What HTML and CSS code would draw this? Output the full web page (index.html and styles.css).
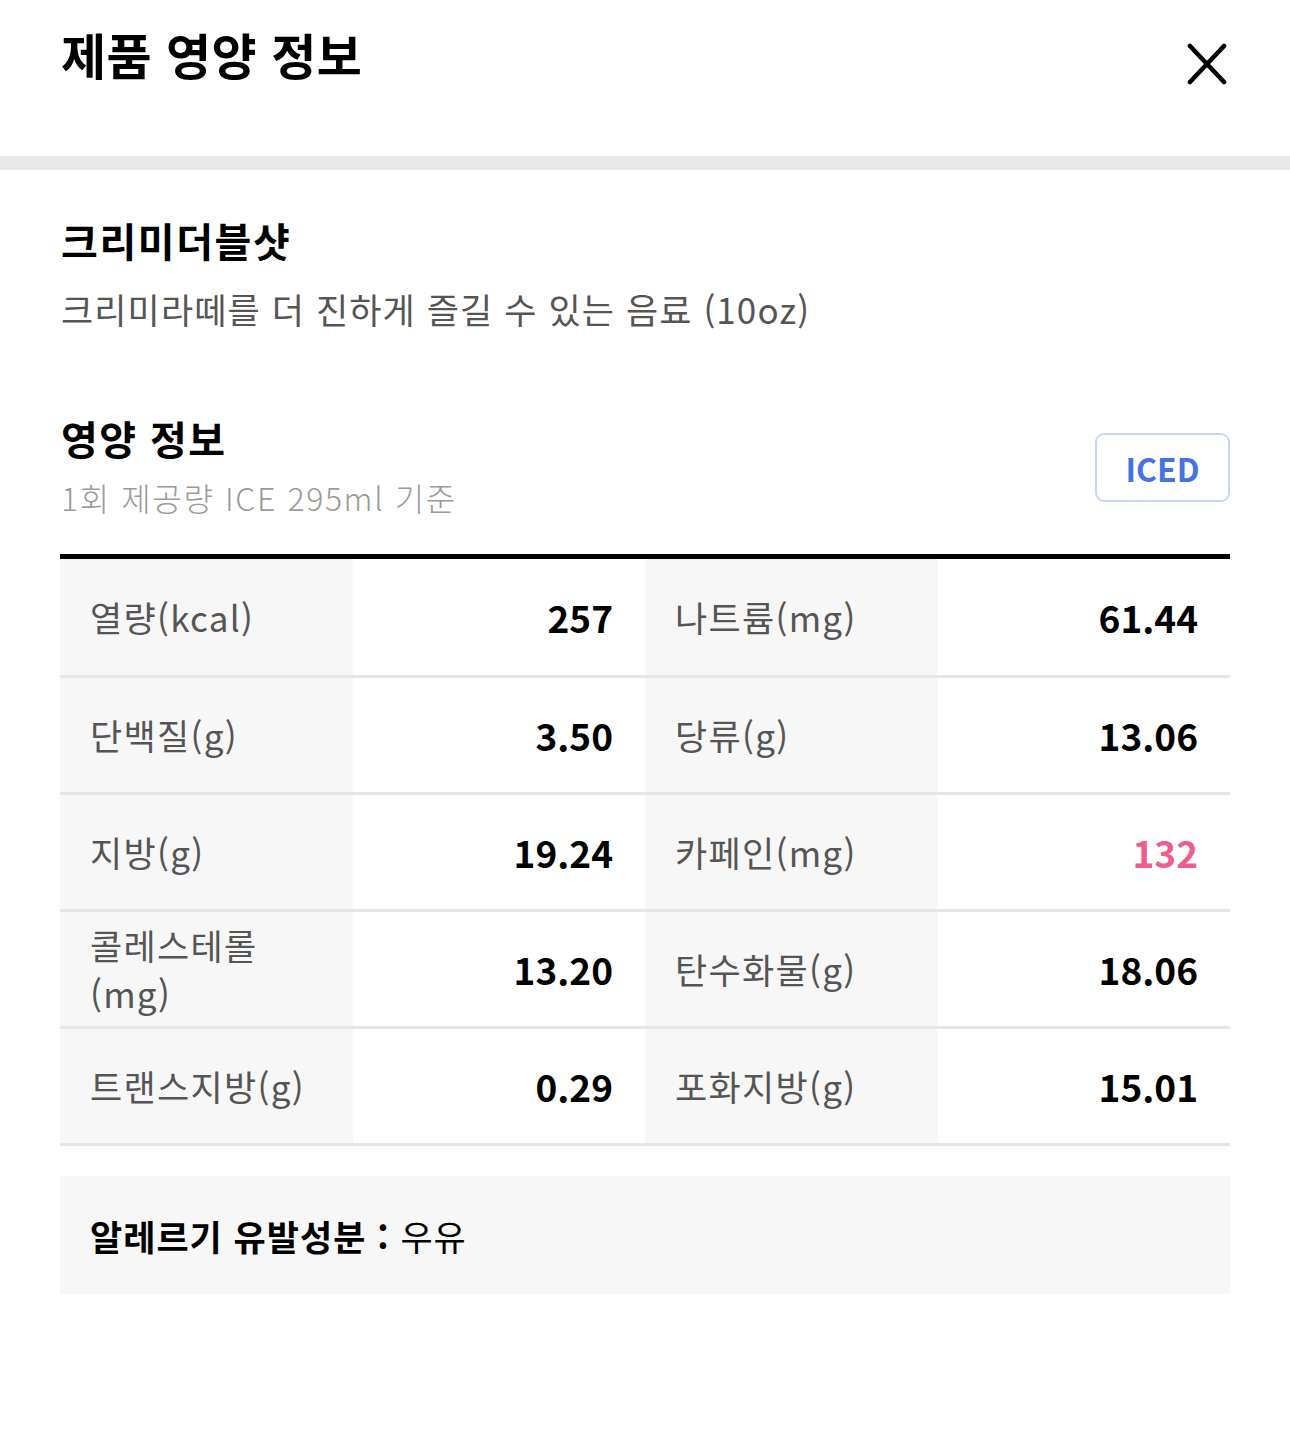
FILE: index.html
```html
<!DOCTYPE html>
<html lang="ko">
<head>
<meta charset="utf-8">
<title>제품 영양 정보</title>
<link rel="stylesheet" href="styles.css">
</head>
<body>
<header class="header">
  <h1 class="title">제품 영양 정보</h1>
  <button class="close" aria-label="닫기">
    <svg width="40" height="42" viewBox="0 0 40 42"><path d="M3 3 L37 39 M37 3 L3 39" stroke="#000" stroke-width="4.6" stroke-linecap="round" fill="none"/></svg>
  </button>
</header>
<div class="divider-bar"></div>
<main class="content">
  <section class="product">
    <h2 class="product-name">크리미더블샷</h2>
    <p class="product-desc">크리미라떼를 더 진하게 즐길 수 있는 음료 (10oz)</p>
  </section>
  <section class="nutrition">
    <div class="nutrition-head">
      <div>
        <h3 class="section-title">영양 정보</h3>
        <p class="serving">1회 제공량 ICE 295ml 기준</p>
      </div>
      <button class="tag">ICED</button>
    </div>
    <div class="table">
      <div class="row">
        <div class="label">열량(kcal)</div><div class="value">257</div>
        <div class="label">나트륨(mg)</div><div class="value">61.44</div>
      </div>
      <div class="row">
        <div class="label">단백질(g)</div><div class="value">3.50</div>
        <div class="label">당류(g)</div><div class="value">13.06</div>
      </div>
      <div class="row">
        <div class="label">지방(g)</div><div class="value">19.24</div>
        <div class="label">카페인(mg)</div><div class="value value-pink">132</div>
      </div>
      <div class="row">
        <div class="label">콜레스테롤<br>(mg)</div><div class="value">13.20</div>
        <div class="label">탄수화물(g)</div><div class="value">18.06</div>
      </div>
      <div class="row">
        <div class="label">트랜스지방(g)</div><div class="value">0.29</div>
        <div class="label">포화지방(g)</div><div class="value">15.01</div>
      </div>
    </div>
    <div class="allergy"><strong>알레르기 유발성분 : </strong>우유</div>
  </section>
</main>
</body>
</html>
```
FILE: styles.css
```css
* { box-sizing: border-box; }
html, body { margin: 0; padding: 0; background: #fff; }
body {
  font-family: "Noto Sans CJK KR", "Noto Sans", sans-serif;
  color: #000;
  width: 1290px;
}
h1, h2, h3, p { margin: 0; }

.header {
  height: 156px;
  display: flex;
  justify-content: space-between;
  align-items: flex-start;
  padding: 24px 63px 0 61px;
}
.title {
  font-size: 49px;
  font-weight: 700;
  line-height: 60px;
  letter-spacing: 0.4px;
}
.close {
  margin-top: 19px;
  padding: 0;
  border: 0;
  background: none;
  width: 40px;
  height: 42px;
  display: block;
}
.close svg { display: block; }

.divider-bar { height: 14px; background: #e8e8e8; }

.content { padding: 0 60px; }

.product { padding-top: 45px; }
.product-name {
  font-size: 40px;
  font-weight: 700;
  line-height: 50px;
  letter-spacing: 1.6px;
  padding-left: 1px;
}
.product-desc {
  margin-top: 20px;
  font-size: 35px;
  line-height: 48px;
  color: #555;
  letter-spacing: 1.1px;
  padding-left: 1px;
}

.nutrition { padding-top: 80px; }
.nutrition-head {
  display: flex;
  justify-content: space-between;
  align-items: flex-start;
}
.section-title {
  font-size: 40px;
  font-weight: 700;
  line-height: 50px;
  letter-spacing: 1.4px;
  padding-left: 1px;
}
.serving {
  margin-top: 12px;
  font-size: 32px;
  line-height: 44px;
  color: #9a9a9a;
  font-weight: 300;
  letter-spacing: 1.6px;
  padding-left: 1px;
}
.tag {
  margin-top: 20px;
  width: 135px;
  height: 69px;
  border: 2.5px solid #c9d6f6;
  border-radius: 9px;
  background: #fff;
  color: #4673e3;
  font-family: inherit;
  font-size: 32px;
  font-weight: 700;
  letter-spacing: 0;
  padding: 0;
}

.table {
  margin-top: 35px;
  border-top: 5px solid #000;
}
.row {
  display: grid;
  grid-template-columns: repeat(4, 1fr);
  height: 117px;
  border-bottom: 3px solid #e6e6e6;
}
.row:first-child { height: 119px; }
.label {
  background: #f7f7f7;
  color: #555;
  font-size: 35px;
  line-height: 48px;
  letter-spacing: 1.3px;
  padding: 0 16px 0 30px;
  display: flex;
  align-items: center;
}
.value {
  background: #fff;
  font-size: 37px;
  font-weight: 700;
  letter-spacing: 0;
  padding: 0 32px 0 20px;
  display: flex;
  align-items: center;
  justify-content: flex-end;
}
.value-pink { color: #ee5d8d; }

.allergy {
  margin-top: 30px;
  height: 118px;
  background: #f7f7f7;
  padding: 0 30px;
  display: flex;
  align-items: center;
  font-size: 35px;
  letter-spacing: 1px;
}
.allergy strong { font-weight: 700; white-space: pre; }
```
